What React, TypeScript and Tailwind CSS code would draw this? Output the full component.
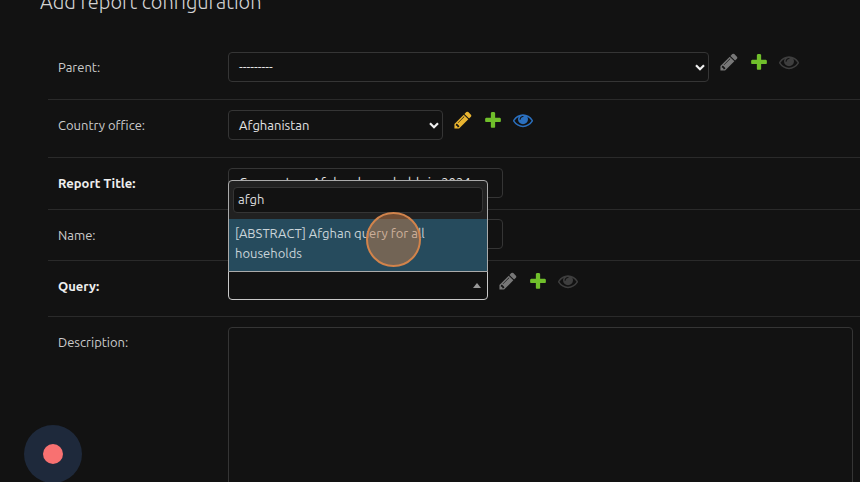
import React from 'react';

const PENCIL =
  'M491 1536l91-91-235-235-91 91v107h128v128h107zm523-928q0-22-22-22-10 0-17 7l-542 542q-7 7-7 17 0 22 22 22 10 0 17-7l542-542q7-7 7-17zm-54-192l416 416-832 832h-416v-416zm683 96q0 53-37 90l-166 166-416-416 166-165q36-38 90-38 53 0 91 38l235 234q37 39 37 91z';
const PLUS =
  'M1600 796v192q0 40-28 68t-68 28h-416v416q0 40-28 68t-68 28h-192q-40 0-68-28t-28-68v-416h-416q-40 0-68-28t-28-68v-192q0-40 28-68t68-28h416v-416q0-40 28-68t68-28h192q40 0 68 28t28 68v416h416q40 0 68 28t28 68z';
const EYE =
  'M1664 960q-152-236-381-353 61 104 61 225 0 185-131.5 316.5t-316.5 131.5-316.5-131.5-131.5-316.5q0-121 61-225-229 117-381 353 133 205 333.5 326.5t434.5 121.5 434.5-121.5 333.5-326.5zm-720-384q0-20-14-34t-34-14q-125 0-214.5 89.5t-89.5 214.5q0 20 14 34t34 14 34-14 14-34q0-86 61-147t147-61q20 0 34-14t14-34zm848 384q0 34-20 69-140 230-376.5 368.5t-499.5 138.5-499.5-139-376.5-368q-20-35-20-69t20-69q140-229 376.5-368t499.5-139 499.5 139 376.5 368q20 35 20 69z';

function Icon({ d, className }: { d: string; className: string }) {
  return (
    <svg viewBox="0 0 1792 1792" className={`size-5 ${className}`} fill="currentColor">
      <path d={d} />
    </svg>
  );
}

function Links({ active = false }: { active?: boolean }) {
  return (
    <div className="ml-2.5 flex gap-2.5">
      <Icon d={PENCIL} className={active ? 'text-[#e9b430]' : 'text-[#777777]'} />
      <Icon d={PLUS} className="text-[#70bf2b]" />
      <Icon d={EYE} className={active ? 'text-[#2b70bf]' : 'text-[#3e3e3e]'} />
    </div>
  );
}

function Chevron() {
  return (
    <svg viewBox="0 0 10 7" className="h-[7px] w-[10px]" fill="none" stroke="#f0f0f0" strokeWidth="2.2">
      <path d="M1 1.2L5 5.2L9 1.2" />
    </svg>
  );
}

function Row({ label, bold = false, className, children }: {
  label: string;
  bold?: boolean;
  className: string;
  children: React.ReactNode;
}) {
  return (
    <div className={`ml-12 flex items-start border-b border-[#2a2a2a] pt-2.5 pl-2.5 ${className}`}>
      <div className={`w-[170px] shrink-0 leading-[30px] ${bold ? 'font-bold text-[#eeeeee]' : 'text-[#cccccc]'}`}>
        {label}
      </div>
      {children}
    </div>
  );
}

const FIELD = 'flex h-[30px] shrink-0 items-center rounded border border-[#353535] bg-[#121212] text-[#e4e4e4]';

export default function App() {
  return (
    <div className="relative h-[482px] w-[860px] overflow-hidden bg-[#121212] font-['Ubuntu','Noto_Sans',sans-serif] text-[13px]">
      <h1 className="h-[42px] pl-10 text-[20px] font-light text-[#d4d4d4]">
        <span className="relative -top-[13px]">Add report configuration</span>
      </h1>
      <Row label="Parent:" className="h-[58px]">
        <div className={`${FIELD} w-[481px] justify-between pr-[3px] pl-2.5`}>
          <span>---------</span>
          <Chevron />
        </div>
        <Links />
      </Row>
      <Row label="Country office:" className="h-[58px]">
        <div className={`${FIELD} w-[215px] justify-between pt-px pr-[3px] pl-2.5`}>
          <span>Afghanistan</span>
          <Chevron />
        </div>
        <Links active />
      </Row>
      <Row label="Report Title:" bold className="h-[52px]">
        <div className={`${FIELD} w-[275px] pl-2.5 whitespace-pre`}>
          <span className="tracking-[0.5px]">Concept</span>
          <span> on Afghan households in 2024</span>
        </div>
      </Row>
      <Row label="Name:" className="h-[51px]">
        <div className={`${FIELD} -mt-px w-[275px]`} />
      </Row>
      <Row label="Query:" bold className="h-[56px]">
        <div className="relative flex h-[29px] w-[260px] shrink-0 items-center justify-end rounded-b border border-[#c8c8c8] bg-[#121212] pr-[6px]">
          <svg viewBox="0 0 8 5" className="h-[5px] w-2" fill="#999999"><path d="M0 5L4 0L8 5Z" /></svg>
          <div className="absolute -left-px bottom-[27px] h-[92px] w-[260px] rounded-t-sm border border-[#aaaaaa] bg-[#212121]">
            <div className="mx-1 mt-[6px] flex h-[26px] items-center rounded border border-[#353535] bg-[#121212] pl-1 text-[#dddddd]">afgh</div>
            <div className="mt-[6px] h-[52px] bg-[#264b5d] px-1.5 pt-1 leading-5 text-[#c9d4d9]">
              <div className="whitespace-nowrap">[ABSTRACT] Afghan query for all</div>
              <div>households</div>
            </div>
          </div>
        </div>
        <Links />
      </Row>
      <Row label="Description:" className="h-[200px]">
        <div className="h-[180px] w-[625px] rounded border border-[#353535]" />
      </Row>
      <div className="absolute top-[212px] left-[366px] size-[55px] rounded-full border-2 border-[#d1834b] bg-[#d1834b]/45" />
      <div className="absolute top-[425px] left-6 flex size-[58px] items-center justify-center rounded-full bg-[#1e293b]">
        <div className="size-5 rounded-full bg-[#f87171]" />
      </div>
    </div>
  );
}
